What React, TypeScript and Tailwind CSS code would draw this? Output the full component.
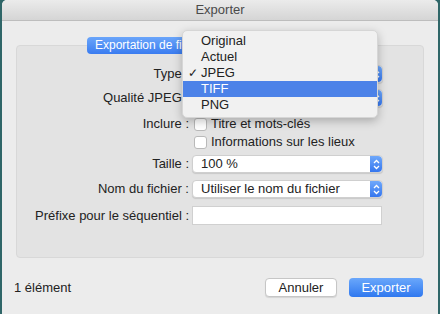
import React from 'react';

const font = { fontFamily: '"Liberation Sans", Arial, sans-serif' };

function Arrows() {
  return (
    <div className="w-[12px] self-stretch rounded-r-[4px] bg-gradient-to-b from-[#6fa8fb] to-[#3576ee] flex items-center justify-center">
      <svg width="7" height="11" viewBox="0 0 7 11" fill="none" stroke="white" strokeWidth="1.3">
        <path d="M1 4 L3.5 1.5 L6 4" />
        <path d="M1 7 L3.5 9.5 L6 7" />
      </svg>
    </div>
  );
}

function Select({ value }: { value?: string }) {
  return (
    <div className="w-[191px] h-[18px] flex bg-white rounded-[4px] border border-[#cfcfcf] shadow-[0_1px_1px_rgba(0,0,0,0.12)]">
      <div className="flex-1 pl-[8px] text-[13px] leading-[16px] text-[#222]">{value}</div>
      <Arrows />
    </div>
  );
}

function Checkbox() {
  return <div className="w-[13px] h-[13px] bg-white border border-[#b9b9b9] rounded-[3px]" />;
}

function Row({ label, children, className = '' }: { label: string; children: React.ReactNode; className?: string }) {
  return (
    <div className={`flex items-center ${className}`}>
      <div className="w-[175px] text-right text-[13px] leading-[16px] text-[#222] pr-[3px] whitespace-nowrap">{label}</div>
      {children}
    </div>
  );
}

const items = ['Original', 'Actuel', 'JPEG', 'TIFF', 'PNG'];

export default function App() {
  return (
    <div className="w-[440px] h-[314px] bg-[#2f6668] overflow-hidden relative" style={font}>
      <div className="ml-[2px] w-[436px] h-[316px] bg-[#ececec] rounded-t-[5px] flex flex-col">
        {/* Title bar */}
        <div className="h-[21px] rounded-t-[5px] bg-gradient-to-b from-[#ebebeb] to-[#d5d5d5] border-b border-[#bdbdbd] flex items-center justify-center text-[13px] text-[#4a4a4a]">
          Exporter
        </div>

        {/* Tab */}
        <div className="mt-[16px] ml-[85px] relative z-10 -mb-[9px]">
          <div className="w-[140px] h-[17px] rounded-[4px] bg-gradient-to-b from-[#6aa5fa] to-[#3a7cf0] text-white text-[12px] leading-[17px] pl-[8px] whitespace-nowrap overflow-hidden">
            Exportation de fichier
          </div>
        </div>

        {/* Panel */}
        <div className="mx-[14px] h-[213px] bg-[#e3e3e3] border border-[#d8d8d8] rounded-[4px] pt-[19px]">
          <Row label="Type :">
            <Select value="JPEG" />
          </Row>
          <Row label="Qualité JPEG :" className="mt-[6px]">
            <Select value="Haute" />
          </Row>
          <Row label="Inclure :" className="mt-[9px]">
            <div className="flex items-center gap-[4px] ml-[2px]">
              <Checkbox />
              <span className="text-[13px] leading-[16px] text-[#222]">Titre et mots-clés</span>
            </div>
          </Row>
          <Row label="" className="mt-[2px]">
            <div className="flex items-center gap-[4px] ml-[2px]">
              <Checkbox />
              <span className="text-[13px] leading-[16px] text-[#222]">Informations sur les lieux</span>
            </div>
          </Row>
          <Row label="Taille :" className="mt-[5px]">
            <Select value="100 %" />
          </Row>
          <Row label="Nom du fichier :" className="mt-[7px]">
            <Select value="Utiliser le nom du fichier" />
          </Row>
          <Row label="Préfixe pour le séquentiel :" className="mt-[8px]">
            <div className="w-[190px] h-[19px] bg-white border border-[#d0d0d0]" />
          </Row>
        </div>

        {/* Footer */}
        <div className="mt-[20px] flex items-center pl-[12px] pr-[15px]">
          <span className="flex-1 text-[13px] text-[#222]">1 élément</span>
          <button className="w-[72px] h-[19px] bg-white border border-[#c6c6c6] rounded-[4px] text-[13px] leading-[17px] text-[#222] shadow-[0_1px_1px_rgba(0,0,0,0.1)]">
            Annuler
          </button>
          <button className="ml-[12px] w-[74px] h-[19px] bg-gradient-to-b from-[#6aa7fb] to-[#2f78ef] rounded-[4px] text-[13px] leading-[19px] text-white">
            Exporter
          </button>
        </div>
      </div>

      {/* Popup menu */}
      <div className="absolute left-[182px] top-[30px] w-[196px] h-[88px] bg-[#f1f1f1] rounded-[5px] border border-[#d6d6d6] shadow-[0_3px_10px_rgba(0,0,0,0.25)] pt-[2px] z-20">
        {items.map((it) => (
          <div
            key={it}
            className={`h-[16px] flex items-center text-[13px] ${it === 'TIFF' ? 'bg-[#4c82e8] text-white' : 'text-[#222]'}`}
          >
            <span className="w-[18px] pl-[5px] text-[12px]">{it === 'JPEG' ? '✓' : ''}</span>
            {it}
          </div>
        ))}
      </div>
    </div>
  );
}
